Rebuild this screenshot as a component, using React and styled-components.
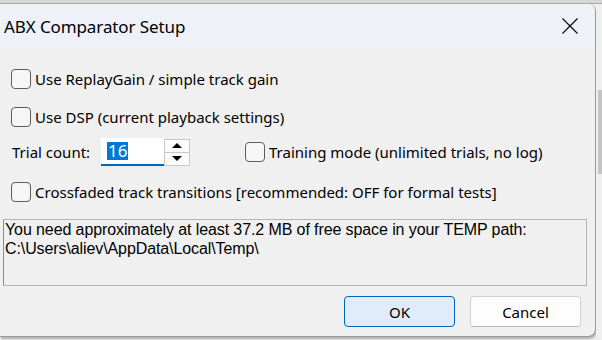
import React from "react";
import styled, { createGlobalStyle } from "styled-components";

const Global = createGlobalStyle`
  html, body { margin: 0; padding: 0; }
  body {
    width: 602px; height: 340px; overflow: hidden;
    background: #ececec;
    font-family: "Noto Sans", "Open Sans", sans-serif;
  }
`;

const Screen = styled.div`
  position: relative;
  width: 602px;
  height: 340px;
  display: flex;
  flex-direction: column;
  background: #eeeeee;
`;

const TopStrip = styled.div`
  height: 3px;
  background: #d6d6d6;
  border-bottom: 1px solid #a9a9a9;
  flex: none;
`;

const Middle = styled.div`
  display: flex;
  flex: 1;
`;

const ScrollStrip = styled.div`
  flex: 1;
  display: flex;
  flex-direction: column;
  background: #efefef;
  padding-top: 86px;
`;

const Thumb = styled.div`
  height: 84px;
  margin-left: 2px;
  background: #c4c4c4;
`;

const Dialog = styled.div`
  width: 596px;
  height: 333px;
  flex: none;
  display: flex;
  flex-direction: column;
  background: #f0f0f0;
  border-radius: 0 8px 8px 0;
  border-right: 1px solid #9a9a9a;
  border-bottom: 1px solid #9a9a9a;
  box-shadow: 1px 2px 2px rgba(0, 0, 0, 0.25);
  overflow: hidden;
  box-sizing: border-box;
`;

const TitleBar = styled.div`
  height: 44px;
  flex: none;
  display: flex;
  align-items: center;
  justify-content: space-between;
  background: #eef2f8;
  padding: 0 17px 0 4px;
`;

const Title = styled.span`
  font-size: 17px;
  color: #000;
  letter-spacing: -0.1px;
`;

const Body = styled.div`
  flex: 1;
  display: flex;
  flex-direction: column;
  padding: 18px 0 0 3px;
`;

const Row = styled.div`
  display: flex;
  align-items: center;
  height: ${(p) => p.$h || 26}px;
  margin-top: ${(p) => p.$mt || 0}px;
  padding-left: ${(p) => p.$pl || 0}px;
`;

const CheckLabel = styled.label`
  display: flex;
  align-items: center;
  gap: 4px;
  font-size: 15px;
  color: #000;
  white-space: nowrap;
`;

const Box = styled.span`
  width: 18px;
  height: 18px;
  flex: none;
  border: 1px solid #5c5c5c;
  border-radius: 4px;
  background: #f6f6f6;
`;

const FieldLabel = styled.span`
  font-size: 15px;
  color: #000;
  width: 89px;
  flex: none;
`;

const Input = styled.div`
  width: 63px;
  height: 28px;
  box-sizing: border-box;
  background: #fff;
  border-bottom: 2px solid #0067c0;
  display: flex;
  align-items: center;
  padding-left: 6px;
  flex: none;
`;

const Selected = styled.span`
  background: #0078d7;
  color: #fff;
  font-size: 17px;
  line-height: 18px;
  padding: 0 1px;
`;

const Spinner = styled.div`
  width: 26px;
  height: 27px;
  box-sizing: border-box;
  display: flex;
  flex-direction: column;
  gap: 1px;
  border: 1px solid #c8c8c8;
  background: #c8c8c8;
  flex: none;
  margin-right: 55px;
`;

const SpinBtn = styled.div`
  flex: 1;
  background: #fbfbfb;
  display: flex;
  align-items: center;
  justify-content: center;
`;

const Arrow = styled.span`
  width: 0;
  height: 0;
  border-left: 5px solid transparent;
  border-right: 5px solid transparent;
  ${(p) =>
    p.$up
      ? "border-bottom: 5px solid #000;"
      : "border-top: 5px solid #000;"}
`;

const InfoBox = styled.div`
  width: 584px;
  height: 67px;
  box-sizing: border-box;
  margin-top: 14px;
  border: 1px solid #b4b4b4;
  border-left-color: #8a8a8a;
  background: #f0f0f0;
  padding: 0 0 0 1px;
  font-family: "Liberation Sans", Arial, sans-serif;
  font-size: 16px;
  line-height: 19px;
  color: #000;
  letter-spacing: -0.1px;
`;

const Buttons = styled.div`
  display: flex;
  justify-content: flex-end;
  gap: 15px;
  padding-right: 14px;
  margin-top: 10px;
`;

const Button = styled.div`
  width: 111px;
  height: 31px;
  box-sizing: border-box;
  display: flex;
  align-items: center;
  justify-content: center;
  border-radius: 4px;
  font-size: 15px;
  color: #000;
  background: ${(p) => (p.$primary ? "#e0ecf9" : "#fdfdfd")};
  border: 1px solid ${(p) => (p.$primary ? "#0067c0" : "#d0d0d0")};
  ${(p) => !p.$primary && "border-bottom-color: #b8b8b8;"}
`;

const CloseIcon = () => (
  <svg width="16" height="16" viewBox="0 0 16 16">
    <path d="M0.5 0.5 L15.5 15.5 M15.5 0.5 L0.5 15.5" stroke="#000" strokeWidth="1.1" />
  </svg>
);

export default function App() {
  return (
    <>
      <Global />
      <Screen>
        <TopStrip />
        <Middle>
          <Dialog>
            <TitleBar>
              <Title>ABX Comparator Setup</Title>
              <CloseIcon />
            </TitleBar>
            <Body>
              <Row $pl={8}>
                <CheckLabel>
                  <Box />
                  Use ReplayGain / simple track gain
                </CheckLabel>
              </Row>
              <Row $pl={8} $mt={12}>
                <CheckLabel>
                  <Box />
                  Use DSP (current playback settings)
                </CheckLabel>
              </Row>
              <Row $pl={9} $mt={8} $h={28}>
                <FieldLabel>Trial count:</FieldLabel>
                <Input>
                  <Selected>16</Selected>
                </Input>
                <Spinner>
                  <SpinBtn>
                    <Arrow $up />
                  </SpinBtn>
                  <SpinBtn>
                    <Arrow />
                  </SpinBtn>
                </Spinner>
                <CheckLabel>
                  <Box />
                  Training mode (unlimited trials, no log)
                </CheckLabel>
              </Row>
              <Row $pl={8} $mt={13}>
                <CheckLabel>
                  <Box />
                  Crossfaded track transitions [recommended: OFF for formal tests]
                </CheckLabel>
              </Row>
              <InfoBox>
                You need approximately at least 37.2 MB of free space in your TEMP path:
                <br />
                C:\Users\aliev\AppData\Local\Temp\
              </InfoBox>
              <Buttons>
                <Button $primary>OK</Button>
                <Button>Cancel</Button>
              </Buttons>
            </Body>
          </Dialog>
          <ScrollStrip>
            <Thumb />
          </ScrollStrip>
        </Middle>
      </Screen>
    </>
  );
}
